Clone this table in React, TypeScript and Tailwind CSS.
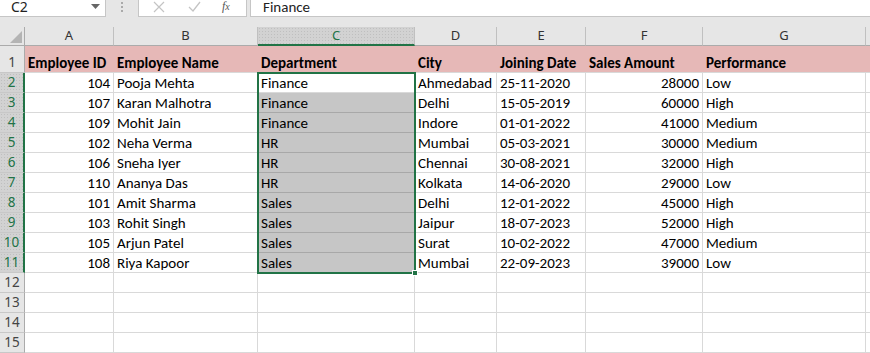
import { ChevronDown } from "lucide-react";

const cols = ["A", "B", "C", "D", "E", "F", "G", ""];

const header = [
  "Employee ID",
  "Employee Name",
  "Department",
  "City",
  "Joining Date",
  "Sales Amount",
  "Performance",
];

const rows = [
  ["104", "Pooja Mehta", "Finance", "Ahmedabad", "25-11-2020", "28000", "Low"],
  ["107", "Karan Malhotra", "Finance", "Delhi", "15-05-2019", "60000", "High"],
  ["109", "Mohit Jain", "Finance", "Indore", "01-01-2022", "41000", "Medium"],
  ["102", "Neha Verma", "HR", "Mumbai", "05-03-2021", "30000", "Medium"],
  ["106", "Sneha Iyer", "HR", "Chennai", "30-08-2021", "32000", "High"],
  ["110", "Ananya Das", "HR", "Kolkata", "14-06-2020", "29000", "Low"],
  ["101", "Amit Sharma", "Sales", "Delhi", "12-01-2022", "45000", "High"],
  ["103", "Rohit Singh", "Sales", "Jaipur", "18-07-2023", "52000", "High"],
  ["105", "Arjun Patel", "Sales", "Surat", "10-02-2022", "47000", "Medium"],
  ["108", "Riya Kapoor", "Sales", "Mumbai", "22-09-2023", "39000", "Low"],
];

const font = "font-['Carlito','Lato',sans-serif]";
const uiFont = "font-['Noto_Sans','Open_Sans',sans-serif]";
const selBg =
  "bg-[#d2d2d2] bg-[radial-gradient(#bfbfbf_0.6px,transparent_0.8px)] bg-[length:3px_3px]";

function FormulaBar() {
  return (
    <div className={`flex h-[27px] bg-[#e6e6e6] ${uiFont}`}>
      <div className="flex h-[17px] w-[106px] items-center justify-between border-b border-r border-[#c6c6c6] bg-white pl-[11px] pr-[4px] text-[14px] text-[#222]">
        <span className="-mt-[2px] leading-[16px]">C2</span>
        <svg width="9" height="5" viewBox="0 0 9 5" className="-mt-[3px] mr-[1px]">
          <path d="M0 0h9L4.5 5z" fill="#666" />
        </svg>
      </div>
      <div className="flex w-[32px] flex-col items-center pt-[1px]">
        <div className="mt-[1px] h-[2px] w-[2px] bg-[#aaa]" />
        <div className="mt-[2px] h-[2px] w-[2px] bg-[#aaa]" />
        <div className="mt-[2px] h-[2px] w-[2px] bg-[#aaa]" />
      </div>
      <div className="flex h-[17px] w-[109px] items-center border-b border-l border-r border-[#c6c6c6] bg-white">
        <svg width="12" height="12" viewBox="0 0 12 12" className="-mt-[3px] ml-[14px]">
          <path d="M1 1l10 10M11 1L1 11" stroke="#c4c4c4" strokeWidth="1.2" />
        </svg>
        <svg width="13" height="11" viewBox="0 0 13 11" className="-mt-[3px] ml-[23px]">
          <path d="M1 6l4 4 7-9" stroke="#c4c4c4" strokeWidth="1.3" fill="none" />
        </svg>
        <span className="-mt-[4px] ml-[21px] font-['Liberation_Serif',serif] text-[12px] italic text-[#555]">
          f<span className="text-[10px]">x</span>
        </span>
      </div>
      <div className="ml-[3px] flex h-[17px] flex-1 items-center border-b border-l border-[#c6c6c6] bg-white pl-[12px] text-[14px] text-[#222]">
        <span className={`-mt-[2px] leading-[16px] ${font} text-[15px]`}>Finance</span>
      </div>
    </div>
  );
}

function ColHeader({ label, selected, last }: { label: string; selected: boolean; last?: boolean }) {
  return (
    <div
      className={`flex h-[19px] items-center justify-center text-[13px] ${uiFont} ${
        selected
          ? `${selBg} border-b-2 border-b-[#217346] text-[#217346]`
          : `border-b border-b-[#ababab] bg-[#e6e6e6] text-[#333]`
      } ${last ? "" : "border-r border-r-[#c0c0c0]"}`}
    >
      {label}
    </div>
  );
}

function RowHeader({ n, selected, h }: { n: number; selected: boolean; h: string }) {
  return (
    <div
      className={`flex ${h} items-end justify-center pb-[1px] text-[13.5px] leading-[17px] ${uiFont} ${
        selected
          ? `${selBg} border-r-2 border-r-[#217346] text-[#217346]`
          : "border-r border-r-[#ababab] bg-[#e6e6e6] text-[#444]"
      } border-b border-b-[#c8c8c8]`}
    >
      {n}
    </div>
  );
}

function Cell({
  text,
  right,
  grey,
}: {
  text?: string;
  right?: boolean;
  grey?: boolean;
}) {
  return (
    <div
      className={`flex h-[20px] items-end overflow-hidden whitespace-nowrap px-[3px] text-[15px] leading-[18px] text-black ${font} ${
        right ? "justify-end" : ""
      } ${
        grey
          ? "border-b border-r border-[#a8a8a8] bg-[#c6c6c6]"
          : "border-b border-r border-[#d9d9d9] bg-white"
      }`}
    >
      {text}
    </div>
  );
}

export default function App() {
  return (
    <div className="h-[353px] w-[870px] overflow-hidden bg-white">
      <FormulaBar />
      <div className="relative grid grid-cols-[25px_89px_144px_157px_82px_89px_117px_163px_1fr]">
        <div className="flex h-[19px] items-end justify-end border-b border-r border-[#ababab] bg-[#e6e6e6] pb-[2px] pr-[2px]">
          <svg width="12" height="12" viewBox="0 0 12 12">
            <path d="M12 0v12H0z" fill="#b4b4b4" />
          </svg>
        </div>
        {cols.map((c, i) => (
          <ColHeader key={i} label={c} selected={c === "C"} last={i === cols.length - 1} />
        ))}

        <RowHeader n={1} selected={false} h="h-[27px]" />
        {header.map((t, i) => (
          <div
            key={i}
            className={`flex h-[27px] items-end whitespace-nowrap border-b border-[#d9d9d9] bg-[#e6b8b7] px-[3px] text-[15px] font-bold leading-[18px] text-black ${font}`}
          >
            {t}
          </div>
        ))}
        <div className="h-[27px] border-b border-[#d9d9d9] bg-[#e6b8b7]" />

        {rows.map((r, ri) => (
          <div key={ri} className="contents">
            <RowHeader n={ri + 2} selected h="h-[20px]" />
            {r.map((v, ci) => (
              <Cell
                key={ci}
                text={v}
                right={ci === 0 || ci === 5}
                grey={ci === 2 && ri > 0}
              />
            ))}
            <Cell />
          </div>
        ))}

        {[12, 13, 14, 15].map((n) => (
          <div key={n} className="contents">
            <RowHeader n={n} selected={false} h="h-[20px]" />
            {cols.map((_, ci) => (
              <Cell key={ci} />
            ))}
          </div>
        ))}

        <div className="pointer-events-none absolute left-[257px] top-[45px] h-[202px] w-[159px] border-2 border-[#217346]" />
        <div className="pointer-events-none absolute left-[412px] top-[243px] h-[6px] w-[6px] border border-white bg-[#217346]" />
      </div>
    </div>
  );
}
